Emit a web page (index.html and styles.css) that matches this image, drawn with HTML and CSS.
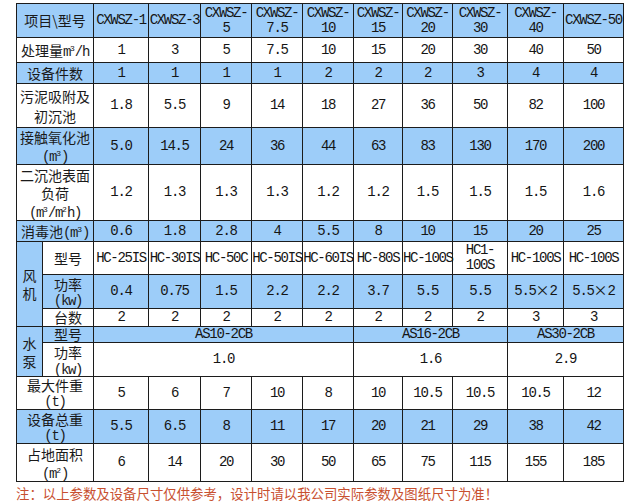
FILE: index.html
```html
<!DOCTYPE html>
<html lang="zh-CN">
<head>
<meta charset="utf-8">
<title>CXWSZ 参数表</title>
<link rel="stylesheet" href="styles.css">
</head>
<body>
<table class="spec">
  <colgroup>
    <col class="c26"><col class="c51"><col class="c55"><col class="c52"><col class="c51"><col class="c51"><col class="c51"><col class="c49"><col class="c50"><col class="c55"><col class="c56"><col class="c60">
  </colgroup>
  <tr class="blue r34 head">
    <td colspan="2" class="lb">项目\型号</td>
    <td>CXWSZ-1</td><td>CXWSZ-3</td><td>CXWSZ-<br>5</td><td>CXWSZ-<br>7.5</td><td>CXWSZ-<br>10</td><td>CXWSZ-<br>15</td><td>CXWSZ-<br>20</td><td>CXWSZ-<br>30</td><td>CXWSZ-<br>40</td><td>CXWSZ-50</td>
  </tr>
  <tr class="r25">
    <td colspan="2" class="lb">处理量<span class="lat">m<sup>3</sup>/h</span></td>
    <td>1</td><td>3</td><td>5</td><td>7.5</td><td>10</td><td>15</td><td>20</td><td>30</td><td>40</td><td>50</td>
  </tr>
  <tr class="blue r21">
    <td colspan="2" class="lb">设备件数</td>
    <td>1</td><td>1</td><td>1</td><td>1</td><td>2</td><td>2</td><td>2</td><td>3</td><td>4</td><td>4</td>
  </tr>
  <tr class="r44">
    <td colspan="2" class="lb lh20">污泥吸附及<br>初沉池</td>
    <td>1.8</td><td>5.5</td><td>9</td><td>14</td><td>18</td><td>27</td><td>36</td><td>50</td><td>82</td><td>100</td>
  </tr>
  <tr class="blue r37">
    <td colspan="2" class="lb lh18">接触氧化池<br><span class="lat">(m<sup>3</sup>)</span></td>
    <td>5.0</td><td>14.5</td><td>24</td><td>36</td><td>44</td><td>63</td><td>83</td><td>130</td><td>170</td><td>200</td>
  </tr>
  <tr class="r56">
    <td colspan="2" class="lb lh18">二沉池表面<br>负荷<br><span class="lat">(m<sup>3</sup>/m<sup>2</sup>h)</span></td>
    <td>1.2</td><td>1.3</td><td>1.3</td><td>1.3</td><td>1.2</td><td>1.2</td><td>1.5</td><td>1.5</td><td>1.5</td><td>1.6</td>
  </tr>
  <tr class="blue r21">
    <td colspan="2" class="lb">消毒池<span class="lat">(m<sup>3</sup>)</span></td>
    <td>0.6</td><td>1.8</td><td>2.8</td><td>4</td><td>5.5</td><td>8</td><td>10</td><td>15</td><td>20</td><td>25</td>
  </tr>
  <tr class="r33">
    <td rowspan="3" class="lb lh18 blue">风<br>机</td>
    <td class="lb">型号</td>
    <td>HC-25IS</td><td>HC-30IS</td><td>HC-50C</td><td>HC-50IS</td><td>HC-60IS</td><td>HC-80S</td><td>HC-100S</td><td class="lh15">HC1-<br>100S</td><td>HC-100S</td><td>HC-100S</td>
  </tr>
  <tr class="blue r34">
    <td class="lb lh15">功率<br><span class="lat">(kw)</span></td>
    <td>0.4</td><td>0.75</td><td>1.5</td><td>2.2</td><td>2.2</td><td>3.7</td><td>5.5</td><td>5.5</td><td>5.5<span class="x">×</span>2</td><td>5.5<span class="x">×</span>2</td>
  </tr>
  <tr class="r18">
    <td class="lb lh15">台数</td>
    <td>2</td><td>2</td><td>2</td><td>2</td><td>2</td><td>2</td><td>2</td><td>2</td><td>3</td><td>3</td>
  </tr>
  <tr class="blue r16">
    <td rowspan="2" class="lb lh18">水<br>泵</td>
    <td class="lb lh15">型号</td>
    <td colspan="5">AS10-2CB</td><td colspan="3">AS16-2CB</td><td colspan="2">AS30-2CB</td>
  </tr>
  <tr class="r34">
    <td class="lb lh16">功率<br><span class="lat">(kw)</span></td>
    <td colspan="5">1.0</td><td colspan="3">1.6</td><td colspan="2">2.9</td>
  </tr>
  <tr class="r33">
    <td colspan="2" class="lb lh15">最大件重<br><span class="lat">(t)</span></td>
    <td>5</td><td>6</td><td>7</td><td>10</td><td>8</td><td>10</td><td>10.5</td><td>10.5</td><td>10.5</td><td>12</td>
  </tr>
  <tr class="blue r34">
    <td colspan="2" class="lb lh15">设备总重<br><span class="lat">(t)</span></td>
    <td>5.5</td><td>6.5</td><td>8</td><td>11</td><td>17</td><td>20</td><td>21</td><td>29</td><td>38</td><td>42</td>
  </tr>
  <tr class="r38">
    <td colspan="2" class="lb lh18">占地面积<br><span class="lat">(m<sup>2</sup>)</span></td>
    <td>6</td><td>14</td><td>20</td><td>30</td><td>50</td><td>65</td><td>75</td><td>115</td><td>155</td><td>185</td>
  </tr>
</table>
<p class="note">注：以上参数及设备尺寸仅供参考，设计时请以我公司实际参数及图纸尺寸为准！</p>
</body>
</html>
```

FILE: styles.css
```css
html, body {
  margin: 0;
  background: #ffffff;
}
body {
  padding: 3px 0 0 16px;
  font-family: "Liberation Mono", "Noto Sans CJK SC", monospace;
}
.spec {
  border-collapse: collapse;
  table-layout: fixed;
  width: 607px;
  font-size: 14px;
  color: #151515;
}
.c26 { width: 26px; }
.c49 { width: 49px; }
.c50 { width: 50px; }
.c51 { width: 51px; }
.c52 { width: 52px; }
.c55 { width: 55px; }
.c56 { width: 56px; }
.c60 { width: 60px; }
.spec td {
  border: 1px solid #1c1c1c;
  padding: 0;
  text-align: center;
  vertical-align: middle;
  line-height: 15px;
  white-space: nowrap;
  letter-spacing: -1.3px;
  overflow: visible;
}
.spec td.lb {
  font-family: "Noto Sans CJK SC", sans-serif;
  letter-spacing: 0;
  color: #1a1a1a;
}
.spec td.lh15 { line-height: 15px; }
.spec td.lh16 { line-height: 16px; }
.spec td.lh18 { line-height: 18px; }
.spec td.lh20 { line-height: 20px; }
.lat {
  font-family: "Liberation Mono", monospace;
  letter-spacing: -1.3px;
  line-height: 10px;
}
.lat sup {
  font-size: 8px;
  line-height: 0;
  vertical-align: 5px;
  letter-spacing: 0;
}
.x {
  font-family: "Noto Sans CJK SC", sans-serif;
  letter-spacing: 0;
  line-height: 10px;
}
.blue, .spec td.blue { background: #9dcdf9; }
.r16 { height: 16px; }
.r18 { height: 18px; }
.r21 { height: 21px; }
.r25 { height: 25px; }
.r33 { height: 33px; }
.r34 { height: 34px; }
.r37 { height: 37px; }
.r38 { height: 38px; }
.r44 { height: 44px; }
.r56 { height: 56px; }
.note {
  margin: 2px 0 0 0;
  font-family: "Noto Sans CJK SC", sans-serif;
  font-size: 13.4px;
  line-height: 18px;
  color: #c8502f;
}
```
